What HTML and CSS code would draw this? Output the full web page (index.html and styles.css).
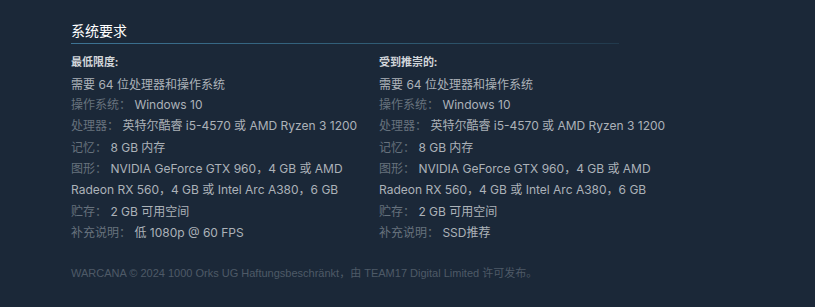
FILE: index.html
```html
<!DOCTYPE html>
<html lang="zh-CN">
<head>
<meta charset="utf-8">
<title>系统要求</title>
<link rel="stylesheet" href="styles.css">
</head>
<body>
<div class="page">
  <section class="sysreq">
    <h2 class="sysreq-title">系统要求</h2>
    <div class="cols">
      <div class="col">
        <div class="col-title">最低限度:</div>
        <ul class="reqs">
          <li class="first">需要 64 位处理器和操作系统</li>
          <li><span class="lbl">操作系统：</span> Windows 10</li>
          <li><span class="lbl">处理器：</span> 英特尔酷睿 i5-4570 或 AMD Ryzen 3 1200</li>
          <li><span class="lbl">记忆：</span> 8 GB 内存</li>
          <li><span class="lbl">图形：</span> NVIDIA GeForce GTX 960，4 GB 或 AMD Radeon RX 560，4 GB 或 Intel Arc A380，6 GB</li>
          <li><span class="lbl">贮存：</span> 2 GB 可用空间</li>
          <li><span class="lbl">补充说明：</span> 低 1080p @ 60 FPS</li>
        </ul>
      </div>
      <div class="col">
        <div class="col-title">受到推崇的:</div>
        <ul class="reqs">
          <li class="first">需要 64 位处理器和操作系统</li>
          <li><span class="lbl">操作系统：</span> Windows 10</li>
          <li><span class="lbl">处理器：</span> 英特尔酷睿 i5-4570 或 AMD Ryzen 3 1200</li>
          <li><span class="lbl">记忆：</span> 8 GB 内存</li>
          <li><span class="lbl">图形：</span> NVIDIA GeForce GTX 960，4 GB 或 AMD Radeon RX 560，4 GB 或 Intel Arc A380，6 GB</li>
          <li><span class="lbl">贮存：</span> 2 GB 可用空间</li>
          <li><span class="lbl">补充说明：</span> SSD推荐</li>
        </ul>
      </div>
    </div>
  </section>
  <p class="legal">WARCANA © 2024 1000 Orks UG Haftungsbeschränkt，由 TEAM17 Digital Limited 许可发布。</p>
</div>
</body>
</html>
```

FILE: styles.css
```css
html, body {
  margin: 0;
  padding: 0;
  background: #1b2838;
}
body {
  font-family: Inter, "Noto Sans CJK SC", sans-serif;
  color: #acb2b8;
}
.page {
  width: 616px;
  padding: 21px 0 0 71px;
}
.sysreq-title {
  margin: 0;
  font-family: "Noto Sans", "Noto Sans CJK SC", sans-serif;
  font-size: 14px;
  line-height: 20px;
  font-weight: normal;
  color: #ffffff;
}
.sysreq-title::after {
  content: "";
  display: block;
  width: 548px;
  height: 1px;
  margin-top: 2px;
  background: linear-gradient(to right, #3d7394 0%, #2f5a72 60%, rgba(47, 90, 114, 0.35) 100%);
}
.cols {
  display: flex;
  margin-top: 10px;
}
.col {
  width: 308px;
  padding-right: 16px;
  box-sizing: border-box;
}
.col-title {
  font-family: "Noto Sans", "Noto Sans CJK SC", sans-serif;
  font-size: 11px;
  line-height: 16px;
  font-weight: bold;
  color: #d2d6da;
  margin-bottom: 7px;
}
.reqs {
  list-style: none;
  margin: 0;
  padding: 0;
  font-size: 12px;
}
.reqs li {
  line-height: 21px;
  margin-bottom: 0.5px;
}
.reqs li.first {
  line-height: 16px;
}
.lbl {
  color: #67727d;
}
.legal {
  margin: 22px 0 0;
  font-family: "Liberation Sans", Arial, "Noto Sans CJK SC", sans-serif;
  font-size: 11px;
  line-height: 14px;
  color: #4e5a67;
}
```
